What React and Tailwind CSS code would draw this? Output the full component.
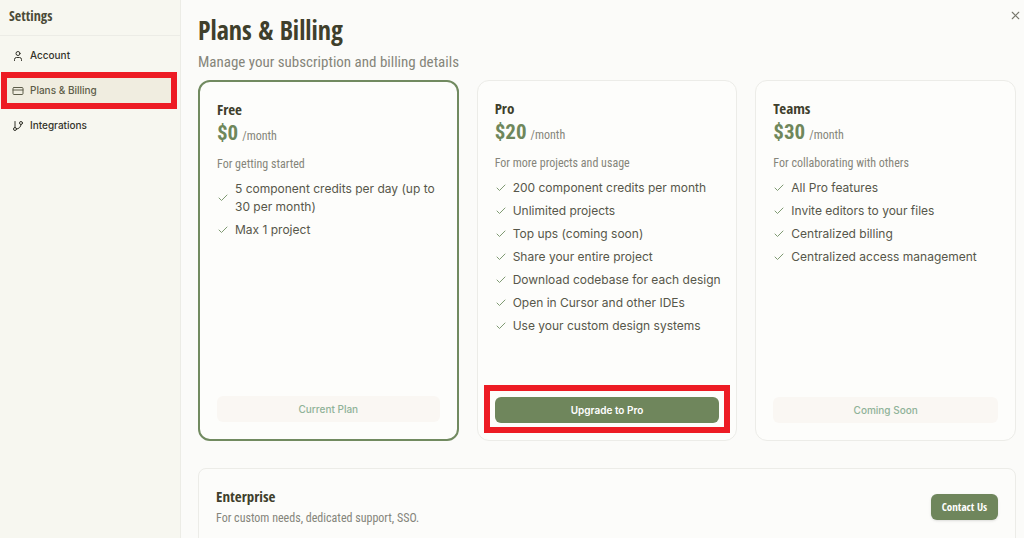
import { Check, CreditCard, GitBranch, User, X } from "lucide-react";

const display = "font-['Open_Sans_Condensed','Open_Sans',sans-serif] font-bold";
const condensed = "font-['Roboto_Condensed',Roboto,sans-serif]";

const navItems = [
  { label: "Account", icon: User },
  { label: "Plans & Billing", icon: CreditCard, active: true },
  { label: "Integrations", icon: GitBranch },
];

const plans = [
  {
    name: "Free",
    price: "$0",
    description: "For getting started",
    features: ["5 component credits per day (up to 30 per month)", "Max 1 project"],
    action: "Current Plan",
    current: true,
  },
  {
    name: "Pro",
    price: "$20",
    description: "For more projects and usage",
    features: [
      "200 component credits per month",
      "Unlimited projects",
      "Top ups (coming soon)",
      "Share your entire project",
      "Download codebase for each design",
      "Open in Cursor and other IDEs",
      "Use your custom design systems",
    ],
    action: "Upgrade to Pro",
    upgrade: true,
  },
  {
    name: "Teams",
    price: "$30",
    description: "For collaborating with others",
    features: [
      "All Pro features",
      "Invite editors to your files",
      "Centralized billing",
      "Centralized access management",
    ],
    action: "Coming Soon",
  },
];

const Sidebar = () => (
  <aside className="w-[181px] shrink-0 border-r border-[#ecece6] bg-[#f7f7f0]">
    <h2
      className={`${display} flex h-9 items-center border-b border-[#ecece6] px-[9px] pb-1 text-[14px] text-[#4b4b38]`}
    >
      Settings
    </h2>
    <nav className="flex flex-col gap-1 px-1 pt-1">
      {navItems.map(({ label, icon: Icon, active }) => (
        <a
          key={label}
          href="#"
          className={`relative flex h-[31px] items-center gap-[6px] rounded px-2 text-[10px] font-medium ${
            active ? "bg-[#f0ede0] text-[#5c5c48]" : "text-[#33332a]"
          }`}
        >
          <Icon size={12} strokeWidth={2} />
          {label}
          {active && (
            <span className="absolute -inset-y-[3px] -right-px -left-[3px] border-[6px] border-[#ed1c24]" />
          )}
        </a>
      ))}
    </nav>
  </aside>
);

const PlanCard = ({ plan }) => (
  <section
    className={`flex h-[361px] flex-col rounded-xl bg-[#fdfdfb] p-[17px] ${
      plan.current ? "border-2 border-[#718a60]" : "border border-[#ecece8]"
    }`}
  >
    <h3 className={`${display} text-[15px] leading-5 text-[#3f3f2c]`}>{plan.name}</h3>
    <p className={`${condensed} flex items-baseline gap-1 leading-7`}>
      <span className="text-[21px] font-bold text-[#6f875b]">{plan.price}</span>
      <span className="text-[12px] text-[#85857a]">/month</span>
    </p>
    <p className={`${condensed} mt-1 text-[12px] leading-5 text-[#85857a]`}>
      {plan.description}
    </p>
    <ul className="mt-[6px] -mr-1 flex flex-col gap-[5px] text-[12px] leading-[18px] text-[#57574a]">
      {plan.features.map((feature) => (
        <li key={feature} className="flex items-center gap-[6px]">
          <Check size={12} strokeWidth={2} className="shrink-0 text-[#7f9a72]" />
          {feature}
        </li>
      ))}
    </ul>
    <div className="relative mt-auto">
      <button
        disabled={!plan.upgrade}
        className={`block h-[26px] w-full rounded-md text-[10px] ${
          plan.upgrade ? "bg-[#6f865c] font-semibold text-white" : "bg-[#faf7f3] font-medium text-[#8fb298]"
        }`}
      >
        {plan.action}
      </button>
      {plan.upgrade && (
        <span className="pointer-events-none absolute -inset-x-[11px] -top-3 -bottom-[10px] border-[6px] border-[#ed1c24]" />
      )}
    </div>
  </section>
);

const Enterprise = () => (
  <section className="mt-[27px] flex items-center justify-between rounded-lg border border-[#ecece8] bg-[#fcfcfa] p-[17px]">
    <div>
      <h3 className={`${display} text-[15px] leading-5 text-[#3f3f2c]`}>Enterprise</h3>
      <p className={`${condensed} mt-[2px] text-[12px] leading-5 text-[#85857a]`}>
        For custom needs, dedicated support, SSO.
      </p>
    </div>
    <button
      className={`${display} h-[26px] w-[67px] rounded-md bg-[#6f865c] text-[11px] text-white shadow-sm`}
    >
      Contact Us
    </button>
  </section>
);

const App = () => {
  return (
    <div className="flex h-screen overflow-hidden bg-[#fbfbf9] font-[Inter,sans-serif]">
      <Sidebar />
      <main className="relative min-w-0 flex-1 pt-[14px] pr-2 pl-[17px]">
        <button aria-label="Close" className="absolute top-[9px] right-[2px] text-[#77776c]">
          <X size={13} />
        </button>
        <h1 className={`${display} text-[26px] leading-8 text-[#3f3f2c]`}>
          Plans &amp; Billing
        </h1>
        <p className={`${condensed} mt-[6px] text-[15px] leading-5 text-[#85857a]`}>
          Manage your subscription and billing details
        </p>
        <div className="mt-2 grid grid-cols-3 gap-[18px]">
          {plans.map((plan) => (
            <PlanCard key={plan.name} plan={plan} />
          ))}
        </div>
        <Enterprise />
      </main>
    </div>
  );
};

export default App;
